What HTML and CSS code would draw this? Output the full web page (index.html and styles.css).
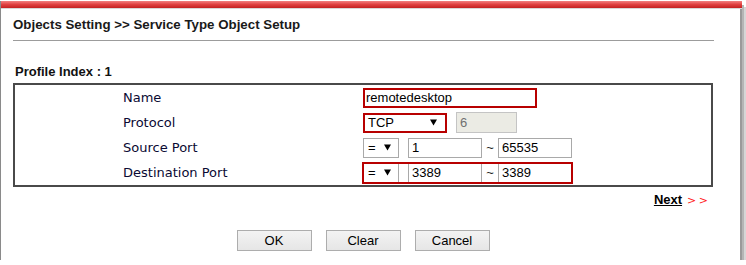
FILE: index.html
```html
<!DOCTYPE html>
<html lang="en">
<head>
    <meta charset="UTF-8">
    <title>Service Type Object Setup</title>
    <link rel="stylesheet" href="styles.css">
</head>
<body>
    <div class="frame">
        <div class="topbar"></div>
        <h1 class="title">Objects Setting &gt;&gt; Service Type Object Setup</h1>
        <div class="profile">Profile Index : 1</div>
        <table class="setup">
            <tr>
                <td class="label">Name</td>
                <td><input class="text name hot" type="text" value="remotedesktop"></td>
            </tr>
            <tr>
                <td class="label">Protocol</td>
                <td>
                    <div class="ctl">
                        <span class="select proto hot">TCP<svg class="arrow" width="7" height="7" viewBox="0 0 7 7"><path d="M0 0.5h7L3.5 6.5z"/></svg></span>
                        <input class="text num" type="text" value="6" disabled>
                    </div>
                </td>
            </tr>
            <tr>
                <td class="label">Source Port</td>
                <td>
                    <div class="ctl">
                        <span class="select op">=<svg class="arrow" width="7" height="7" viewBox="0 0 7 7"><path d="M0 0.5h7L3.5 6.5z"/></svg></span>
                        <input class="text port" type="text" value="1">
                        <span class="tilde">~</span>
                        <input class="text port" type="text" value="65535">
                    </div>
                </td>
            </tr>
            <tr>
                <td class="label">Destination Port</td>
                <td>
                    <div class="ctl hl">
                        <span class="select op">=<svg class="arrow" width="7" height="7" viewBox="0 0 7 7"><path d="M0 0.5h7L3.5 6.5z"/></svg></span>
                        <input class="text port" type="text" value="3389">
                        <span class="tilde">~</span>
                        <input class="text port" type="text" value="3389">
                    </div>
                </td>
            </tr>
        </table>
        <div class="next"><a href="#">Next</a><span class="chev">&gt; &gt;</span></div>
        <div class="buttons">
            <button class="btn">OK</button>
            <button class="btn">Clear</button>
            <button class="btn">Cancel</button>
        </div>
    </div>
</body>
</html>
```

FILE: styles.css
```css
body {
    margin: 0px;
    padding: 0px;
    background-color: #ffffff;
    font-family: Arial, "Liberation Sans", sans-serif;
}
.frame {
    width: 740px;
    height: 259px;
    box-sizing: border-box;
    border-left: 1px solid #8a8a8a;
    background-color: #ffffff;
    box-shadow: 2px 2px 0px #9a9a9a, 4px 4px 0px #b5b5b5, 6px 6px 0px #d6d6d6;
}
.topbar {
    height: 7px;
    margin-top: 1px;
    margin-right: -2px;
    background: linear-gradient(#f28080, #e04040 50%, #c42222);
    border-bottom: 1px solid #d8d8d8;
}
.title {
    margin: 0px 26px 0px 12px;
    padding: 8px 0px 8px 0px;
    font-size: 13.3px;
    line-height: 15px;
    font-weight: bold;
    color: #1a1a1a;
    border-bottom: 1px solid #9c9c9c;
}
.profile {
    margin: 24px 0px 0px 14px;
    font-size: 13px;
    line-height: 14px;
    font-weight: bold;
    color: #111111;
}
.setup {
    margin: 4px 0px 0px 12px;
    width: 700px;
    border: 2px solid #4a4a4a;
    border-collapse: separate;
    border-spacing: 0px;
}
.setup td {
    height: 25px;
    padding: 0px;
    vertical-align: middle;
}
.setup .label {
    width: 240px;
    padding-left: 108px;
    font-family: "DejaVu Sans", Verdana, sans-serif;
    font-size: 13px;
    color: #0a0a33;
}
.ctl {
    display: inline-flex;
    align-items: center;
    vertical-align: middle;
}
.hl {
    outline: 2px solid #b80000;
    outline-offset: -1px;
}
.text {
    box-sizing: border-box;
    height: 20px;
    margin: 0px;
    padding: 0px 3px;
    border: 1px solid #a9a9a9;
    font-family: Arial, "Liberation Sans", sans-serif;
    font-size: 13px;
    color: #000000;
    background-color: #ffffff;
    vertical-align: middle;
}
.name {
    width: 174px;
    padding-left: 1px;
}
.num {
    width: 61px;
    height: 21px;
    margin-left: 9px;
    background-color: #ebebe4;
    border-color: #c4c4c4;
    color: #707070;
}
.port {
    width: 74px;
}
.select {
    box-sizing: border-box;
    display: inline-flex;
    align-items: center;
    justify-content: space-between;
    height: 20px;
    padding: 0px 7px 0px 4px;
    border: 1px solid #a9a9a9;
    font-size: 13px;
    color: #000000;
    background-color: #ffffff;
}
.proto {
    width: 84px;
    height: 20px;
    padding-left: 3px;
    padding-right: 8px;
}
.op {
    width: 36px;
    margin-right: 9px;
}
.text.hot,
.select.hot {
    border: 2px solid #b80000;
}
.arrow {
    fill: #000000;
}
.tilde {
    width: 16px;
    text-align: center;
    font-size: 13px;
    color: #222222;
}
.next {
    width: 700px;
    margin: 5px 0px 0px 12px;
    text-align: right;
    font-size: 13px;
    line-height: 15px;
    white-space: nowrap;
}
.next a {
    color: #000000;
    font-weight: bold;
    text-decoration: underline;
}
.chev {
    display: inline-block;
    padding: 0px 5px 0px 5px;
    color: #ff1a1a;
    font-family: "DejaVu Sans", Verdana, sans-serif;
    font-size: 11px;
    word-spacing: -1px;
}
.buttons {
    width: 700px;
    margin: 22px 0px 0px 12px;
    display: flex;
    justify-content: center;
    gap: 14px;
}
.btn {
    width: 75px;
    height: 21px;
    padding: 0px;
    border: 1px solid #adadad;
    background: linear-gradient(#f3f3f3, #e6e6e6);
    font-family: Arial, "Liberation Sans", sans-serif;
    font-size: 13px;
    color: #000000;
}
```
